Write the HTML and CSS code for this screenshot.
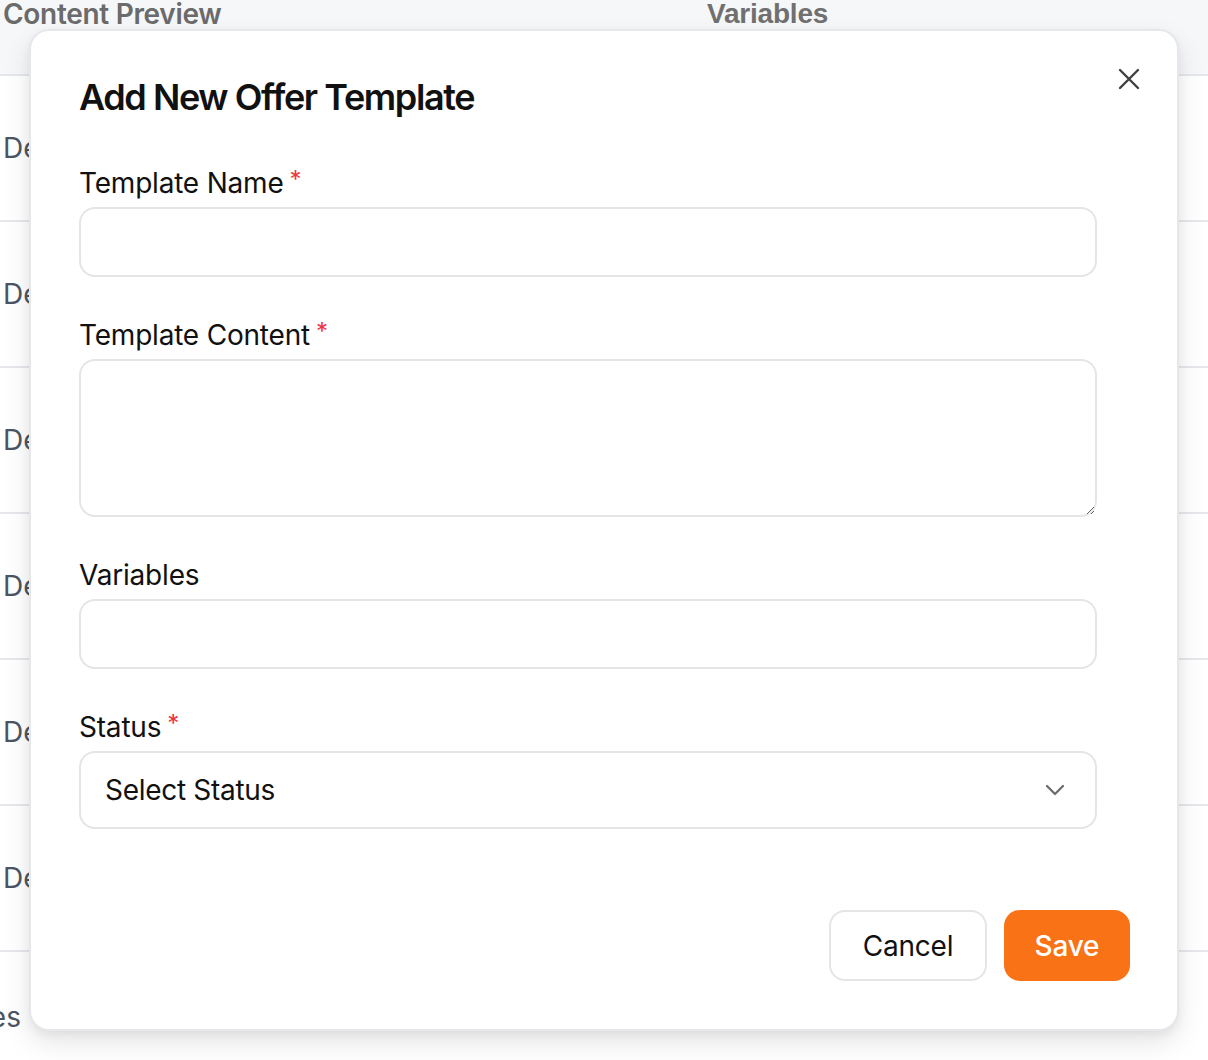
FILE: index.html
```html
<!DOCTYPE html>
<html lang="en">
<head>
<meta charset="utf-8">
<title>Add New Offer Template</title>
<link rel="stylesheet" href="styles.css">
</head>
<body>
<div class="table">
  <div class="thead">
    <div class="th th-preview">Content Preview</div>
    <div class="th th-vars">Variables</div>
  </div>
  <div class="row"><span class="cell">De</span></div>
  <div class="row"><span class="cell">De</span></div>
  <div class="row"><span class="cell">De</span></div>
  <div class="row"><span class="cell">De</span></div>
  <div class="row"><span class="cell">De</span></div>
  <div class="row"><span class="cell">De</span></div>
  <div class="row row-last"><span class="cell cell-shift">Yes</span></div>
</div>

<div class="modal">
  <button class="close" aria-label="Close">
    <svg width="22" height="22" viewBox="0 0 22 22" fill="none" stroke="#404040" stroke-width="2.4" stroke-linecap="round"><path d="M2 2L20 20M20 2L2 20"/></svg>
  </button>
  <h2 class="title">Add New Offer Template</h2>
  <form class="form">
    <div class="field">
      <label class="label">Template Name<span class="req">*</span></label>
      <input class="input" type="text">
    </div>
    <div class="field">
      <label class="label">Template Content<span class="req">*</span></label>
      <textarea class="input textarea"></textarea>
    </div>
    <div class="field">
      <label class="label">Variables</label>
      <input class="input" type="text">
    </div>
    <div class="field">
      <label class="label">Status<span class="req">*</span></label>
      <div class="select">
        <span>Select Status</span>
        <svg width="20" height="12" viewBox="0 0 20 12" fill="none" stroke="#6b6b6b" stroke-width="2.2" stroke-linecap="round" stroke-linejoin="round"><path d="M2 2L10 10L18 2"/></svg>
      </div>
    </div>
    <div class="actions">
      <button type="button" class="btn btn-cancel">Cancel</button>
      <button type="button" class="btn btn-save">Save</button>
    </div>
  </form>
</div>
</body>
</html>
```
FILE: styles.css
```css
* { box-sizing: border-box; }
html, body { margin: 0; padding: 0; }
body {
  width: 1208px;
  height: 1060px;
  overflow: hidden;
  background: #ffffff;
  font-family: Inter, "Noto Sans", sans-serif;
  color: #111111;
  position: relative;
}

/* background table */
.table { margin-top: -6px; }
.thead {
  height: 82px;
  background: #f6f7f9;
  border-bottom: 2px solid #e5e7eb;
  display: flex;
  align-items: flex-start;
}
.th {
  font-size: 28px;
  font-weight: 600;
  color: #6b6b6b;
  line-height: 40px;
}
.th-preview { margin-left: 3px; width: 704px; letter-spacing: -0.3px; }
.th-vars { font-family: "Liberation Sans", Arial, sans-serif; font-weight: 700; color: #707070; font-size: 28px; letter-spacing: -0.2px; }
.row {
  height: 146px;
  border-bottom: 2px solid #e5e7eb;
  display: flex;
  align-items: center;
}
.row-last { height: 130px; border-bottom: none; }
.cell {
  margin-left: 3px;
  font-size: 28px;
  color: #4b5563;
}
.cell-shift { margin-left: -27px; }

/* modal */
.modal {
  position: absolute;
  left: 29px;
  top: 29px;
  width: 1150px;
  height: 1002px;
  background: #ffffff;
  border: 2px solid #e6e7ea;
  border-radius: 20px;
  box-shadow: 0 12px 28px rgba(0, 0, 0, 0.10), 0 4px 10px rgba(0, 0, 0, 0.05);
  padding: 44px 47px 47px 48px;
}
.close {
  position: absolute;
  top: 37px;
  right: 37px;
  width: 22px;
  height: 22px;
  padding: 0;
  border: none;
  background: none;
  display: flex;
}
.title {
  margin: 0;
  font-size: 36px;
  line-height: 44px;
  font-weight: 600;
  letter-spacing: -1.4px;
  color: #111111;
}
.form {
  display: flex;
  flex-direction: column;
  margin-top: 46px;
}
.field {
  display: flex;
  flex-direction: column;
  gap: 6px;
  margin-right: 33px;
  margin-bottom: 40px;
}
.label {
  font-size: 28px;
  line-height: 36px;
  font-weight: 400;
  color: #111111;
  letter-spacing: -0.2px;
  display: flex;
  align-items: flex-start;
}
.req {
  color: #ef3340;
  font-size: 24px;
  line-height: 24px;
  margin-left: 6px;
  margin-top: 3px;
}
.input {
  display: block;
  width: 100%;
  height: 70px;
  border: 2px solid #e5e5e5;
  border-radius: 16px;
  background: #ffffff;
  font-family: inherit;
  font-size: 28px;
  padding: 0 24px;
  outline: none;
}
.textarea {
  height: 158px;
  resize: vertical;
  padding: 16px 24px;
}
.select {
  height: 78px;
  border: 2px solid #e5e5e5;
  border-radius: 16px;
  padding: 0 30px 0 24px;
  display: flex;
  align-items: center;
  justify-content: space-between;
  font-size: 28px;
  color: #111111;
  letter-spacing: -0.3px;
}
.actions {
  display: flex;
  justify-content: flex-end;
  gap: 17px;
  margin-top: 41px;
}
.btn {
  font-family: inherit;
  font-size: 28px;
  height: 71px;
  border-radius: 16px;
  letter-spacing: -0.2px;
  cursor: pointer;
}
.btn-cancel {
  width: 158px;
  background: #ffffff;
  border: 2px solid #e5e5e5;
  color: #111111;
  font-weight: 400;
}
.btn-save {
  width: 126px;
  background: #f97316;
  border: none;
  color: #ffffff;
  font-weight: 500;
}
```
